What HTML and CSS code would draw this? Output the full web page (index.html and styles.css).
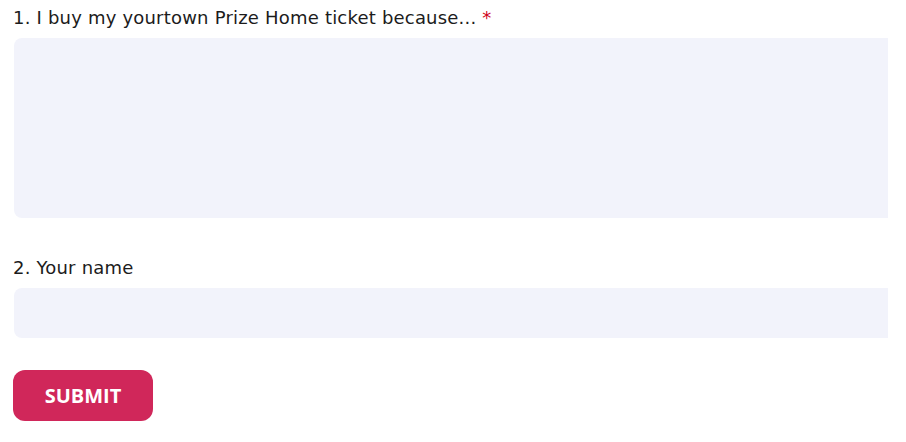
FILE: index.html
```html
<!DOCTYPE html>
<html lang="en">
<head>
    <meta charset="UTF-8">
    <meta name="viewport" content="width=device-width, initial-scale=1.0">
    <title>yourtown Prize Home</title>
    <link rel="stylesheet" href="styles.css">
</head>
<body>
    <form class="survey" id="survey-form">
        <div class="form-group">
            <label for="reason">1. I buy my yourtown Prize Home ticket because... <span class="required">*</span></label>
            <textarea id="reason" name="reason" required></textarea>
        </div>

        <div class="form-group">
            <label for="name">2. Your name</label>
            <input type="text" id="name" name="name">
        </div>

        <button type="submit">SUBMIT</button>
    </form>
</body>
</html>
```

FILE: styles.css
```css
* {
    box-sizing: border-box;
}
body {
    margin: 0;
    padding: 4px 18px 0 13px;
    background-color: #fff;
    font-family: 'DejaVu Sans', 'Noto Sans', sans-serif;
    color: #1c1c1c;
    overflow: hidden;
}
.survey {
    width: 875px;
}
.form-group {
    margin-bottom: 32px;
}
.form-group:first-child {
    margin-bottom: 36px;
}
label {
    display: block;
    font-size: 18px;
    line-height: 28px;
    margin-bottom: 6px;
    letter-spacing: 0.2px;
}
.required {
    color: #d0021b;
}
textarea,
input {
    display: block;
    width: 874px;
    margin-left: 1px;
    border: none;
    border-radius: 8px 0 0 8px;
    background-color: #f2f3fb;
    font-size: 16px;
    padding: 12px;
}
textarea {
    height: 180px;
    resize: none;
}
input {
    height: 50px;
}
button {
    background-color: #d0275a;
    color: #fff;
    border: none;
    border-radius: 12px;
    width: 140px;
    height: 51px;
    font-size: 20px;
    font-weight: 700;
    font-family: 'Open Sans', sans-serif;
    cursor: pointer;
}
```
